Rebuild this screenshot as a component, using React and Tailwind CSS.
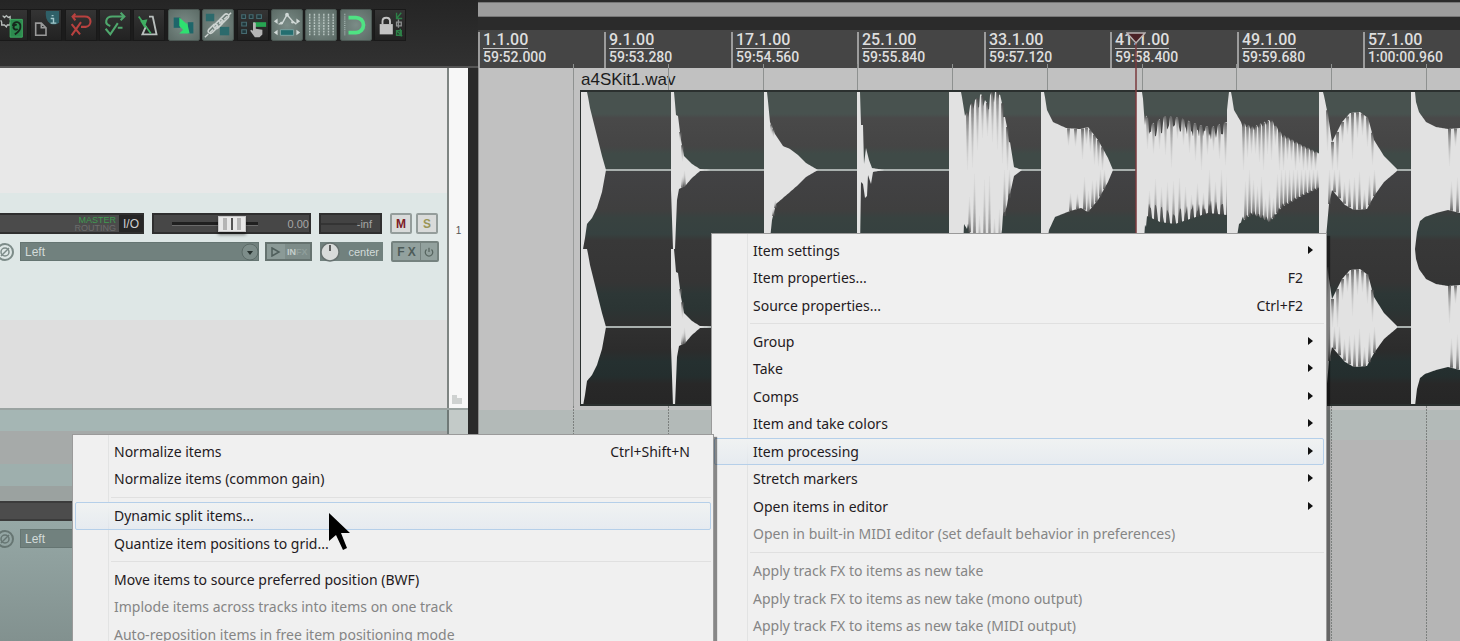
import React from "react";

/* ---------- toolbar icons ---------- */
const G = "#3fae62";
const W = "#b9bfbd";

const TOOL_ICONS = [
  {
    label: "Project settings",
    on: false,
    art: (
      <>
        <path d="M6 6l2 2 2-2 2 2 2-1v3l2 2-2 2v2l-3 0-1 2-2-2H5l0-3-1-2" fill="none" stroke={W} strokeWidth="1.4" />
        <rect x="14" y="10" width="13" height="19" fill="#2c8a4e" />
        <path d="M17 17c0-6 9-5 8 1 0 4-3 6-6 8M21 16a2.500 2.500 0 1 0 1 4" fill="none" stroke="#16271c" strokeWidth="2" />
        <path d="M14 10h13v19H14z" fill="none" stroke={G} strokeWidth="1" />
      </>
    ),
  },
  {
    label: "Item information",
    on: false,
    art: (
      <>
        <path d="M16 1h14v12c-2 3-7 3-10 1s-5-7-4-13z" fill="#2f6068" />
        <path d="M22 6h2M21 9h3v5M21 14h6" stroke="#a4c8cc" strokeWidth="1.500" fill="none" />
        <path d="M5 14h6l5 5v8H5zM11 14v5h5" fill="none" stroke="#9a9a9a" strokeWidth="1.700" />
      </>
    ),
  },
  {
    label: "Undo",
    on: false,
    art: (
      <path d="M10 4L7 7l3 4M7 7h13c8 0 8 10 1 11h-5M6 15l9 11M16 13L6 27" fill="none" stroke="#b8413f" strokeWidth="2.200" />
    ),
  },
  {
    label: "Redo",
    on: false,
    art: (
      <path d="M22 3l4 4-4 4M26 7H13c-7 0-9 8-2 10M6 20l5 6 8-12M19 19h5" fill="none" stroke="#4fa86d" strokeWidth="2.200" />
    ),
  },
  {
    label: "Metronome",
    on: false,
    art: (
      <>
        <path d="M16 7h4l4 19H9l4-9" fill="none" stroke={W} strokeWidth="2" />
        <path d="M5 7l13 18M8 12l5-1-2 6z" fill={G} stroke={G} strokeWidth="1.800" />
      </>
    ),
  },
  {
    label: "Automatic crossfade",
    on: true,
    art: (
      <>
        <rect x="5" y="8" width="7" height="11" fill="#1e666a" />
        <rect x="20" y="13" width="6" height="12" fill="#1e666a" />
        <path d="M11 8l8 7V12l3 13H11l4-4-4-4z" fill="#2fe070" />
      </>
    ),
  },
  {
    label: "Item grouping",
    on: true,
    art: (
      <>
        <rect x="3" y="4" width="9" height="8" fill="#2c6a6c" />
        <rect x="18" y="18" width="10" height="9" fill="#2c6a6c" />
        <path d="M2 29L30 3" stroke="#cdd3d1" strokeWidth="1.500" strokeDasharray="5 2" />
        <path d="M6 21l5-5c2-2 6 0 4 3l-5 5c-2 2-6 0-4-3zM12 16l5-5c2-2 6 0 4 3l-5 5c-2 2-6 0-4-3zM18 10l5-5c2-2 6 0 4 3l-5 5c-2 2-6 0-4-3z" fill="none" stroke="#cdd3d1" strokeWidth="1.700" />
      </>
    ),
  },
  {
    label: "Ripple editing",
    on: false,
    art: (
      <>
        <path d="M4 5h4v4H4zM12 5h4v4h-4zM20 5h5v4h-5zM4 13h5v4H4zM4 21h5v4H4z" fill="#20363a" stroke="#466a70" strokeWidth="1.200" />
        <path d="M16 13h14v5H16z" fill="#27a552" />
        <path d="M17 13c2 0 2 1 2 2v5l7 1v5l-3 3h-5l-5-7 1-1 2 1v-7c0-1 0-2 1-2z" fill="#b4b4b4" />
      </>
    ),
  },
  {
    label: "Envelope points move with items",
    on: true,
    art: (
      <>
        <path d="M7 15l4-1 5-9 6 7 4 3" fill="none" stroke="#d0d8d6" strokeWidth="1.500" />
        <circle cx="16" cy="5" r="2" fill="#d0d8d6" />
        <circle cx="22" cy="13" r="1.500" fill="#d0d8d6" />
        <circle cx="10" cy="14" r="1.500" fill="#d0d8d6" />
        <path d="M2 12l4-3v6zM30 12l-4-3v6zM2 24l4-3v6zM30 24l-4-3v6z" fill="#d0d8d6" />
        <path d="M9 21h14v6H9z" fill="#246e70" stroke="#7fa3a1" />
      </>
    ),
  },
  {
    label: "Grid lines",
    on: true,
    art: (
      <path d="M4 4v24M9 4v24M14 4v24M19 4v24M24 4v24M29 4v24" stroke="#b9c6c2" strokeWidth="1.500" strokeDasharray="2 1" />
    ),
  },
  {
    label: "Snap",
    on: true,
    art: (
      <>
        <path d="M4 4v24" stroke="#a5b5b1" strokeDasharray="1 1" strokeWidth="1.500" />
        <path d="M8 8h8a8 8 0 0 1 0 16H8" fill="none" stroke="#4fe383" strokeWidth="4" />
      </>
    ),
  },
  {
    label: "Locking",
    on: false,
    art: (
      <>
        <rect x="5" y="15" width="14" height="11" fill="#c3c3c3" />
        <path d="M8 15v-3c0-5 8-5 8 0v3" fill="none" stroke="#c3c3c3" strokeWidth="2" />
        <path d="M23 3v6h6M28 3l-5 6M23 22h5v5h-5zM23 22l6 6M27 20v8" fill="none" stroke="#2d8148" strokeWidth="1.500" />
        <path d="M23 13h5v4h-5zM25 10v9" fill="none" stroke="#8d9090" strokeWidth="1.400" />
      </>
    ),
  },
];

function Toolbar() {
  return (
    <div className="h-[68px] overflow-hidden border-b-2 border-[#555555] bg-gradient-to-b from-[#252525] to-[#313131] pt-[9px]">
      <div className="-ml-1 flex w-[410px] justify-between bg-[#1c1c1c]">
        {TOOL_ICONS.map((t) => (
          <button
            key={t.label}
            aria-label={t.label}
            className={
              t.on
                ? "size-8 shrink-0 rounded-xs border border-[#4c5854] bg-[radial-gradient(#7b8c87,#5c6b66)]"
                : "size-8 shrink-0 border border-[#191919] bg-gradient-to-b from-[#343434] to-[#222222]"
            }
          >
            <svg viewBox="0 0 32 32" className="size-full" aria-hidden="true">
              {t.art}
            </svg>
          </button>
        ))}
      </div>
    </div>
  );
}

/* ---------- track panel ---------- */
function PhaseButton({ tone }) {
  return (
    <button aria-label="Invert phase" className={"-ml-1 size-[18px] shrink-0 " + tone}>
      <svg viewBox="0 0 18 18" className="size-full" fill="none" stroke="currentColor" aria-hidden="true">
        <circle cx="9" cy="9" r="8" strokeWidth="2" />
        <circle cx="9" cy="9" r="4" strokeWidth="1.500" />
        <path d="M5 13l8-8" strokeWidth="1.500" />
      </svg>
    </button>
  );
}

function InputSelect({ label }) {
  return (
    <div className="relative ml-[6px] flex h-[19px] w-[239px] items-center">
      <select
        aria-label={label}
        className="size-full appearance-none border border-[#657572] bg-[#71817e] pl-1 text-[12px] leading-4 text-[#d3dbd9]"
      >
        <option>Left</option>
      </select>
      <svg viewBox="0 0 18 18" className="pointer-events-none absolute right-0 size-[18px]" aria-hidden="true">
        <circle cx="9" cy="9" r="8" fill="#7d8d8a" stroke="#5b6a67" />
        <path d="M6 8h6l-3 4z" fill="#26302e" />
      </svg>
    </div>
  );
}

function TrackPanel() {
  return (
    <section aria-label="Track 1" className="flex h-[342px] border-b-2 border-[#9aa3a1]">
      <div className="flex min-w-0 flex-1 flex-col">
        <div className="h-[125px] bg-[#e8e8e8]" />
        <div className="h-[127px] bg-[#dee7e6] pt-5">
          <div className="flex h-[21px] items-center">
            <div className="flex h-full w-[144px] border-y-2 border-r border-[#2f2f2f] bg-[#4b4b4b]">
              <div className="flex flex-1 flex-col items-end justify-center pr-[3px] text-[9px] leading-2">
                <span className="text-[#3f9a50]">MASTER</span>
                <span className="text-[#6b6b6b]">ROUTING</span>
              </div>
              <button className="w-6 bg-[#262626] text-[12px] leading-4 text-[#cfcfcf]">I/O</button>
            </div>
            <div className="relative ml-2 flex h-full w-[159px] items-center justify-end border-2 border-[#2f2f2f] bg-[#474747]">
              <input type="range" aria-label="Volume" defaultValue="60" className="absolute left-4 w-[100px] opacity-0" />
              <div className="pointer-events-none absolute left-[18px] h-1 w-[86px] border-b border-[#6b6b6b] bg-[#202020]" />
              <div className="pointer-events-none absolute left-16 flex h-4 w-7 items-center justify-center gap-1 border border-[#c6c6c6] bg-[#e8e8e8] shadow-[0_3px_3px_#00000066]">
                <i className="h-3 w-1 bg-[#b5b5b5]" />
                <i className="h-3 w-[2px] bg-[#555555]" />
                <i className="h-3 w-1 bg-[#b5b5b5]" />
              </div>
              <span className="text-[11px] leading-4 text-[#a6a6a6]">0.00</span>
            </div>
            <div className="relative ml-2 flex h-full w-[63px] items-center justify-end border-2 border-[#2f2f2f] bg-[#434343] pr-2 text-[11px] leading-4 text-[#a6a6a6]">
              <i className="h-[2px] flex-1 bg-[#343434]" />
              <span>-inf</span>
            </div>
            <div className="ml-2 flex h-full gap-1">
              <button className="w-[22px] rounded-xs border-2 border-[#949d9b] bg-[#d9dbda] text-[12px] leading-4 font-bold text-[#7d2026]">M</button>
              <button className="w-[22px] rounded-xs border-2 border-[#949d9b] bg-[#d9dbda] text-[12px] leading-4 font-bold text-[#9a9556]">S</button>
            </div>
          </div>

          <div className="mt-[7px] flex h-[21px] items-center">
            <PhaseButton tone="text-[#7d8c89]" />
            <InputSelect label="Track 1 input" />
            <div className="ml-[6px] flex h-[19px] w-[47px] border-2 border-[#65726f] bg-[#71817e]">
              <button aria-label="Record monitoring" className="flex w-[18px] items-center justify-center bg-[#8b9a97]">
                <svg viewBox="0 0 10 10" className="size-[10px]" aria-hidden="true">
                  <path d="M1 1l7 4-7 4z" fill="none" stroke="#4f5e5b" strokeWidth="1.500" />
                </svg>
              </button>
              <button className="flex flex-1 items-center bg-[#7d8c89] pl-[2px] text-[9px] leading-3 font-bold text-[#c4cfcc]">
                IN<span className="text-[#8f9e9b]">FX</span>
              </button>
            </div>
            <div className="ml-2 flex h-[19px] w-[63px] items-center justify-between bg-[#71817e] pr-1">
              <svg viewBox="0 0 20 20" className="size-5" aria-hidden="true">
                <circle cx="10" cy="10" r="9" fill="#d8dbda" stroke="#66716f" strokeWidth="1.500" />
                <path d="M10 3v6" stroke="#333" strokeWidth="1.500" />
              </svg>
              <span className="text-[11px] leading-4 text-[#d3dbd9]">center</span>
            </div>
            <div className="ml-2 flex h-[21px] w-12 rounded-xs border-2 border-[#75827f] bg-[#92a19e]">
              <button className="flex-1 border-r border-[#75827f] text-[12px] leading-4 font-bold text-[#4e5c59]">F X</button>
              <button aria-label="Bypass FX" className="flex w-4 items-center justify-center">
                <svg viewBox="0 0 12 12" className="size-[10px]" fill="none" stroke="#56645f" strokeWidth="1.500" aria-hidden="true">
                  <path d="M3 3a4.500 4.500 0 1 0 6 0M6 1v5" />
                </svg>
              </button>
            </div>
          </div>
        </div>
        <div className="flex-1 bg-[#dedede]" />
      </div>
      <div className="flex w-[21px] flex-col border-l-2 border-[#7e8482] bg-[#f7f7f7] text-[10px] leading-4 text-[#555555]">
        <span className="flex flex-1 items-center justify-center">1</span>
        <svg viewBox="0 0 12 10" className="mb-1 ml-[2px] h-[10px] w-3" aria-hidden="true">
          <path d="M1 1h5v3h5v6H1z" fill="#cfd2d1" />
        </svg>
      </div>
    </section>
  );
}

function SecondTrack() {
  return (
    <section aria-label="Track 2" className="flex min-h-0 flex-1">
      <div className="flex min-w-0 flex-1 flex-col">
        <div className="h-[21px] bg-[#a5b6b4]" />
        <div className="h-[33px] bg-[#a6aaa9]" />
        <div className="h-[22px] bg-[#9eafad]" />
        <div className="h-[15px] bg-[#9ba2a0]" />
        <div className="h-5 border-y-2 border-[#3b3b3b] bg-[#4c4c4c]" />
        <div className="flex flex-1 flex-col bg-gradient-to-b from-[#96a8a6] to-[#82918f] pt-2">
          <div className="flex h-[19px] items-center">
            <PhaseButton tone="text-[#667572]" />
            <InputSelect label="Track 2 input" />
          </div>
        </div>
      </div>
      <div className="w-[21px] border-l-2 border-[#6f7977] bg-[#c3cac8]" />
    </section>
  );
}

/* ---------- waveform ---------- */
const noise = (n) => {
  const v = Math.sin(n * 127.1) * 43758.5453;
  return v - Math.floor(v);
};

const at = (pts, x) => {
  for (let i = 1; i < pts.length; i++) {
    if (x <= pts[i][0]) {
      const [ax, ay] = pts[i - 1];
      const [bx, by] = pts[i];
      return ay + ((by - ay) * (x - ax)) / (bx - ax || 1);
    }
  }
  return pts[pts.length - 1][1];
};

/* top / bottom: amplitude envelopes; rough: [from, to, pitch, depth]; streaks: [from, to, pitch, length] */
const HITS = [
  {
    top: [[581, 79], [587, 79], [590, 62], [595, 42], [602, 14], [606, 0]],
    bottom: [[581, 79], [583, 79], [585, 68], [587, 54], [592, 48], [597, 38], [602, 22], [606, 0]],
  },
  {
    top: [[671, 79], [674, 79], [676, 55], [678, 54], [681, 30], [684, 14], [692, 6], [700, 1], [711, 0]],
    bottom: [[671, 20], [673, 79], [675, 79], [677, 30], [679, 19], [685, 16], [692, 8], [700, 1], [711, 0]],
    streaks: [[680, 684, 2, 14]],
  },
  {
    top: [[764, 79], [767, 79], [770, 48], [775, 36], [783, 24], [790, 21], [798, 15], [806, 7], [818, 0]],
    bottom: [[764, 79], [769, 79], [772, 50], [776, 34], [790, 22], [798, 15], [806, 7], [818, 0]],
    streaks: [[771, 774, 2, 12]],
  },
  {
    top: [[857, 79], [860, 79], [861, 45], [863, 45], [864, 6], [866, 22], [869, 10], [872, 2], [884, 0]],
    bottom: [[857, 79], [860, 79], [861, 12], [863, 14], [865, 28], [867, 26], [868, 5], [871, 14], [873, 2], [884, 0]],
  },
  {
    top: [[949, 79], [961, 79], [965, 54], [971, 66], [981, 76], [987, 67], [993, 82], [999, 80], [1004, 58], [1010, 28], [1014, 3], [1022, 0]],
    bottom: [[949, 79], [963, 79], [964, 54], [970, 64], [978, 78], [999, 80], [1004, 46], [1010, 24], [1014, 6], [1022, 0]],
    rough: [[964, 1013, 5, 0.12]],
    streaks: [[967, 1010, 5, 58]],
  },
  {
    top: [[1041, 79], [1044, 79], [1047, 60], [1053, 48], [1066, 42], [1080, 41], [1088, 43], [1098, 30], [1108, 12], [1113, 0]],
    bottom: [[1041, 79], [1046, 79], [1049, 60], [1055, 47], [1070, 41], [1081, 38], [1088, 42], [1098, 30], [1108, 12], [1113, 0]],
    streaks: [[1068, 1082, 7, 16], [1082, 1106, 4, 32]],
  },
  {
    top: [[1136, 79], [1142, 79], [1145, 56], [1152, 46], [1165, 54], [1180, 52], [1200, 45], [1212, 43], [1227, 48]],
    bottom: [[1136, 79], [1144, 79], [1147, 46], [1160, 52], [1175, 54], [1190, 49], [1208, 43], [1227, 45]],
    rough: [[1143, 1226, 6, 0.2]],
    streaks: [[1147, 1226, 6, 40]],
  },
  {
    top: [[1227, 60], [1229, 79], [1231, 79], [1234, 60], [1241, 48], [1253, 43], [1271, 51], [1282, 36], [1300, 26], [1319, 17]],
    bottom: [[1227, 79], [1235, 79], [1239, 54], [1252, 44], [1270, 52], [1282, 37], [1300, 27], [1319, 18]],
    rough: [[1240, 1319, 4, 0.06]],
    streaks: [[1243, 1316, 4, 38]],
  },
  {
    top: [[1319, 79], [1323, 79], [1328, 55], [1332, 28], [1342, 48], [1350, 57], [1360, 58], [1368, 52], [1374, 30], [1384, 14], [1397, 1]],
    bottom: [[1319, 79], [1325, 79], [1329, 34], [1332, 20], [1338, 27], [1345, 35], [1354, 40], [1367, 39], [1374, 26], [1384, 12], [1397, 1]],
    streaks: [[1327, 1376, 5, 36]],
  },
  {
    top: [[1411, 79], [1415, 79], [1416, 68], [1419, 58], [1426, 48], [1436, 43], [1448, 41], [1460, 42]],
    bottom: [[1411, 79], [1415, 79], [1417, 62], [1420, 51], [1425, 47], [1436, 43], [1448, 40], [1460, 43]],
    streaks: [[1449, 1460, 6, 32]],
  },
];

const edge = (hit, pts, x) => {
  let a = at(pts, x);
  for (const [f, t, p, d] of hit.rough || []) {
    if (x > f && x < t && x % p >= p / 2) a *= 1 - d * (0.5 + noise(x));
  }
  return a;
};

const outline = (hit) => {
  const x0 = hit.top[0][0];
  const x1 = hit.top[hit.top.length - 1][0];
  const up = [];
  const down = [];
  for (let x = x0; x <= x1; x++) {
    up.push(`${x},${(-Math.min(78, edge(hit, hit.top, x))).toFixed(1)}`);
    down.unshift(`${x},${Math.min(79, edge(hit, hit.bottom, x)).toFixed(1)}`);
  }
  return up.concat(down).join(" ");
};

const wedges = (hit) => {
  const list = [];
  for (const [f, t, p, len] of hit.streaks || []) {
    for (let x = f; x < t; x += p) {
      const k = 0.5 + noise(x) * 0.8;
      const m = 0.5 + noise(x + 7) * 0.8;
      const a = Math.min(78, at(hit.top, x));
      const b = Math.min(79, at(hit.bottom, x + 2));
      list.push({ x, y: -a, h: Math.min(a, len * k), up: true });
      list.push({ x: x + 2, y: b, h: Math.min(b, len * m), up: false });
    }
  }
  return list;
};

function Channel({ y }) {
  return (
    <g transform={`translate(0 ${y})`}>
      <path d="M581 0H1460" stroke="#a9b0ae" strokeWidth="2" />
      {HITS.map((hit, i) => (
        <g key={i}>
          <polygon points={outline(hit)} fill="#e2e2e2" />
          {wedges(hit).map((w, j) => (
            <path
              key={j}
              d={`M${w.x - 1} ${w.y}h3l-1 ${w.up ? w.h : -w.h}h-1z`}
              fill={w.up ? "url(#fadeDown)" : "url(#fadeUp)"}
            />
          ))}
        </g>
      ))}
    </g>
  );
}

function MediaItem() {
  return (
    <div className="ml-[101px] h-[316px] overflow-hidden border-y-2 border-l border-[#2b302f] bg-[linear-gradient(180deg,#48524f_0px,#48524f_22px,#494949_26px,#454545_54px,#3f4a47_62px,#3f4a47_76px,#424244_80px,#3f3f3f_118px,#384240_126px,#364140_142px,#383838_148px,#353535_190px,#2d3736_202px,#2b3534_216px,#303030_234px,#2c2c2c_258px,#253030_270px,#242e2e_284px,#282828_292px,#262626_314px)]">
      <svg viewBox="581 92 880 312" width="880" height="312" role="img" aria-label="Waveform of a4SKit1.wav">
        <defs>
          <linearGradient id="fadeDown" x1="0" y1="0" x2="0" y2="1">
            <stop offset="0" stopColor="#4a4a4a" stopOpacity="0.8" />
            <stop offset="1" stopColor="#bbb" stopOpacity="0.1" />
          </linearGradient>
          <linearGradient id="fadeUp" x1="0" y1="1" x2="0" y2="0">
            <stop offset="0" stopColor="#4a4a4a" stopOpacity="0.8" />
            <stop offset="1" stopColor="#bbb" stopOpacity="0.1" />
          </linearGradient>
        </defs>
        <Channel y={170} />
        <Channel y={327} />
      </svg>
    </div>
  );
}

/* ---------- timeline ---------- */
const MARKS = [
  ["1.1.00", "59:52.000"],
  ["9.1.00", "59:53.280"],
  ["17.1.00", "59:54.560"],
  ["25.1.00", "59:55.840"],
  ["33.1.00", "59:57.120"],
  ["41.1.00", "59:58.400"],
  ["49.1.00", "59:59.680"],
  ["57.1.00", "1:00:00.960"],
];

const GRID_X = [94.5, 189.5, 284.5, 378.5, 473.5, 568.5, 663.5, 757.5, 852.5, 947.5];

function Timeline() {
  return (
    <main className="relative flex min-w-0 flex-1 flex-col bg-[#2b2b2b]">
      <div className="mt-[2px] h-[15px] border-y border-[#777777] bg-[#9d9d9d]" />
      <div className="mt-[13px] flex h-[38px] overflow-hidden bg-[#454545] pt-[2px] font-['Roboto',sans-serif] font-medium">
        {MARKS.map(([bar, time]) => (
          <div key={bar} className="flex w-[126px] shrink-0 flex-col items-start border-l-2 border-[#9c9c9c] pl-[3px] text-[#dedede] even:w-[127px]">
            <span className="border-b border-[#c4c4c4] text-[16px] leading-4">{bar}</span>
            <span className="text-[14px] leading-4">{time}</span>
          </div>
        ))}
      </div>
      <div className="relative flex flex-1 flex-col border-l border-[#8c8c8c] bg-[#c1c1c1]">
        <div className="h-[22px] pl-[102px] text-[17px] leading-6 text-[#1c1c1c]">a4SKit1.wav</div>
        <MediaItem />
        <div className="mt-1 h-[30px] bg-[#b3bab8]" />
        <div className="flex-1 bg-[#b5b5b5]" />
        <svg className="pointer-events-none absolute inset-x-0 -top-1 h-[26px] w-full" aria-hidden="true">
          {GRID_X.map((x) => (
            <path key={x} d={`M${x} 0V26`} stroke="#8e9190" />
          ))}
        </svg>
        <svg className="pointer-events-none absolute top-[22px] left-0 h-[316px] w-[100px]" aria-hidden="true">
          <path d="M94.500 0V316" stroke="#9a9c9b" />
        </svg>
        <svg className="pointer-events-none absolute inset-x-0 top-[338px] h-[300px] w-full" aria-hidden="true">
          {GRID_X.map((x) => (
            <path key={x} d={`M${x} 0V300`} stroke="#7c807e" strokeDasharray="2 1" />
          ))}
        </svg>
      </div>
      <svg viewBox="0 0 20 380" className="absolute top-8 left-[648px] h-[380px] w-5" aria-hidden="true">
        <path d="M10 2V380" stroke="#7a3a3c" strokeWidth="1.500" />
        <path d="M1 1h18l-9 10z" fill="#4b2226" stroke="#b9b3b3" strokeWidth="1.500" />
      </svg>
    </main>
  );
}

/* ---------- context menus ---------- */
const ITEM_MENU = [
  { t: "Item settings", sub: true },
  { t: "Item properties...", key: "F2" },
  { t: "Source properties...", key: "Ctrl+F2" },
  null,
  { t: "Group", sub: true },
  { t: "Take", sub: true },
  { t: "Comps", sub: true },
  { t: "Item and take colors", sub: true },
  { t: "Item processing", sub: true, active: true },
  { t: "Stretch markers", sub: true },
  { t: "Open items in editor", sub: true },
  { t: "Open in built-in MIDI editor (set default behavior in preferences)", off: true },
  null,
  { t: "Apply track FX to items as new take", off: true },
  { t: "Apply track FX to items as new take (mono output)", off: true },
  { t: "Apply track FX to items as new take (MIDI output)", off: true },
];

const PROCESSING_MENU = [
  { t: "Normalize items", key: "Ctrl+Shift+N" },
  { t: "Normalize items (common gain)" },
  null,
  { t: "Dynamic split items...", active: true },
  { t: "Quantize item positions to grid..." },
  null,
  { t: "Move items to source preferred position (BWF)" },
  { t: "Implode items across tracks into items on one track", off: true },
  { t: "Auto-reposition items in free item positioning mode", off: true },
];

function Menu({ items, label, place }) {
  return (
    <div
      role="menu"
      aria-label={label}
      className={
        "absolute flex flex-col border border-[#9a9a9a] bg-[#f0f0f0] bg-[linear-gradient(90deg,transparent_35px,#e2e3e3_35px,#e2e3e3_36px,transparent_36px)] px-[2px] py-[3px] font-['Noto_Sans',sans-serif] text-[14px] shadow-[3px_3px_1px_#00000070] " +
        place
      }
    >
      {items.map((it, i) =>
        it === null ? (
          <div key={i} role="separator" className="flex h-[9px] shrink-0 items-center pl-9">
            <div className="h-px flex-1 bg-[#e0e0e0]" />
          </div>
        ) : (
          <button
            key={i}
            role="menuitem"
            disabled={it.off}
            className={
              "flex h-[27px] shrink-0 items-center justify-between rounded-xs border pr-[9px] pl-[38px] text-left leading-5 whitespace-nowrap even:h-7 " +
              (it.active
                ? "border-[#b5cfe9] bg-gradient-to-b from-[#f0f2f2] to-[#dde6f080] "
                : "border-transparent ") +
              (it.off ? "text-[#858585]" : "text-[#1f1a22]")
            }
          >
            <span>{it.t}</span>
            {it.key && <span className="pr-[11px]">{it.key}</span>}
            {it.sub && (
              <svg viewBox="0 0 8 10" className="mb-[2px] h-[10px] w-2" aria-hidden="true">
                <path d="M2 1l5 4-5 4z" fill="#111" />
              </svg>
            )}
          </button>
        )
      )}
    </div>
  );
}

export default function App() {
  return (
    <div className="relative flex h-screen overflow-hidden bg-[#2b2b2b] font-['Liberation_Sans',sans-serif]">
      <div className="flex w-[478px] shrink-0 flex-col">
        <Toolbar />
        <div className="flex min-h-0 flex-1 flex-col border-r-10 border-[#2a2a2a]">
          <TrackPanel />
          <SecondTrack />
        </div>
      </div>
      <Timeline />
      <Menu items={ITEM_MENU} label="Item" place="top-[233px] left-[711px] w-[616px]" />
      <Menu items={PROCESSING_MENU} label="Item processing" place="top-[434px] left-[72px] w-[642px]" />
      <svg viewBox="0 0 22 40" className="pointer-events-none absolute top-[512px] left-[328px] h-10 w-[22px]" aria-hidden="true">
        <path d="M1 1v28l7-6 7 15 4-2-6-15h9z" fill="#000" />
      </svg>
    </div>
  );
}
